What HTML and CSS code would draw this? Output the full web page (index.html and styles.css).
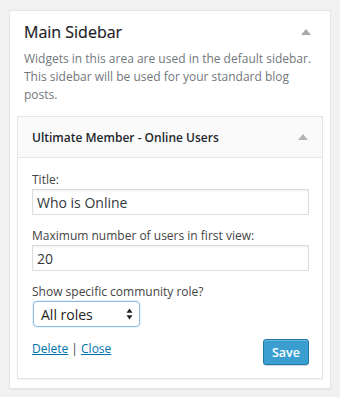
FILE: index.html
```html
<!DOCTYPE html>
<html lang="en">
<head>
  <meta charset="UTF-8" />
  <title>Widgets</title>
  <link rel="stylesheet" href="styles.css">
</head>
<body>
  <div class="sidebar">
    <div class="sidebar-head">
      <h2>Main Sidebar</h2>
      <span class="toggle"></span>
    </div>
    <p class="sidebar-desc">Widgets in this area are used in the default sidebar. This sidebar will be used for your standard blog posts.</p>

    <div class="widget">
      <div class="widget-top">
        <h3>Ultimate Member - Online Users</h3>
        <span class="toggle small"></span>
      </div>
      <div class="widget-inside">
        <div class="field">
          <label>Title:</label>
          <input type="text" value="Who is Online">
        </div>
        <div class="field">
          <label>Maximum number of users in first view:</label>
          <input type="text" value="20">
        </div>
        <div class="field">
          <label>Show specific community role?</label>
          <div class="select">
            <span>All roles</span>
            <svg width="7" height="12" viewBox="0 0 7 12"><path d="M3.5 0.5 6.5 4.8H0.5Z M3.5 11.5 6.5 7.2H0.5Z" fill="#222"/></svg>
          </div>
        </div>
        <div class="controls">
          <div class="links"><a href="#">Delete</a> | <a href="#">Close</a></div>
          <button class="save" type="button">Save</button>
        </div>
      </div>
    </div>
  </div>
</body>
</html>
```
FILE: styles.css
```css
* {margin:0;padding:0;box-sizing:border-box}
body {
  background:#f1f1f1;font-family:"Open Sans", "Noto Sans", sans-serif;color:#444;
  padding:10px 9px 9px;
}
.sidebar {
  background:#fff;border:1px solid #e5e5e5;box-shadow:0 1px 1px rgba(0,0,0,.04);
  padding:0 7px 9px;
}
.sidebar-head {
  display:flex;align-items:center;justify-content:space-between;padding:9px 12px 0 7px;
}
.sidebar-head h2 {font-size:16px;font-weight:400;color:#1d2126;line-height:24px;-webkit-text-stroke:.2px #1d2126}
.toggle {
  width:0;height:0;border-left:5px solid transparent;border-right:5px solid transparent;
  border-bottom:6px solid #aaa;
}
.toggle.small {border-bottom-color:#b4b4b4}
.sidebar-desc {
  font-size:12px;line-height:18px;color:#72777c;padding:6px 0 0 7px;margin-bottom:12px;
}
.widget {
  border:1px solid #e5e5e5;box-shadow:0 1px 1px rgba(0,0,0,.04);background:#fff;
}
.widget-top {
  height:41px;background:#fafafa;border-bottom:1px solid #e5e5e5;
  display:flex;align-items:center;justify-content:space-between;padding:0 14px 0 14px;
}
.widget-top h3 {font-size:12px;font-weight:600;color:#23282d}
.widget-inside {padding:13px 13px 13px 14px}
.field {margin-bottom:12px}
.field label {display:block;font-size:12px;line-height:18px;color:#444}
.field input {
  display:block;width:100%;height:26px;border:1px solid #ddd;
  box-shadow:inset 0 1px 2px rgba(0,0,0,.07);padding:0 4px;
  font:14px "Open Sans", sans-serif;color:#32373c;outline:none;
}
.select {
  width:107px;height:26px;margin-left:1px;border:1px solid #8db9e3;border-radius:4px;
  box-shadow:0 0 2px rgba(30,140,190,.35);display:flex;align-items:center;justify-content:space-between;
  padding:0 6px 0 7px;font-size:14px;color:#222;
}
.controls {display:flex;justify-content:space-between;align-items:flex-start}
.links {font-size:12px;line-height:18px;color:#444;padding-top:1px}
.links a {color:#0073aa}
.save {
  width:46px;height:26px;background:#3a9fd0;border:1px solid #1c79a8;border-radius:3px;
  box-shadow:inset 0 1px 0 rgba(140,205,235,.6), 0 1px 0 rgba(0,0,0,.15);
  color:#fff;font:600 12.5px "Open Sans", sans-serif;
}
```
